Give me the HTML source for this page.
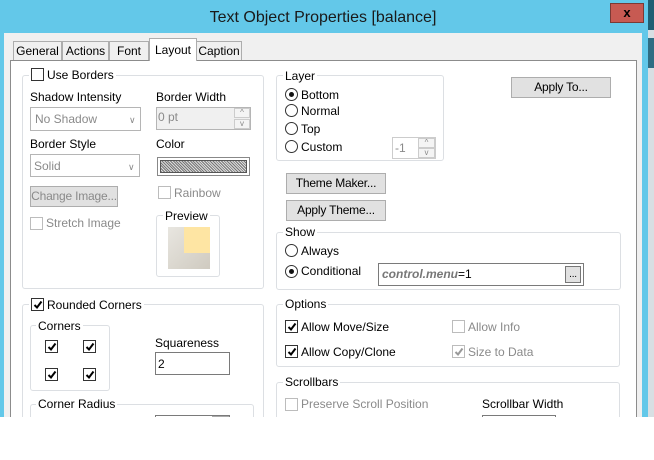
<!DOCTYPE html>
<html><head><style>
*{box-sizing:border-box;margin:0;padding:0}
body{width:654px;height:460px;background:#fff;position:relative;overflow:hidden;font-family:"Liberation Sans",sans-serif;font-size:12px;color:#000}
.a{position:absolute}
.t{position:absolute;white-space:nowrap;line-height:14px}
.g{position:absolute;border:1px solid #dcdfe3;border-radius:3px}
.gl{position:absolute;background:#fff;padding:0 2px;line-height:14px;white-space:nowrap}
.cb{position:absolute;width:13px;height:13px;border:1px solid #333;background:#fff}
.cb.d{border-color:#bcbcbc}
.cb svg{position:absolute;left:1px;top:1px}
.rb{position:absolute;width:13px;height:13px;border:1px solid #333;border-radius:50%;background:#fff}
.rb.on::after{content:"";position:absolute;left:3px;top:3px;width:5px;height:5px;border-radius:50%;background:#111}
.btn{position:absolute;background:#e1e1e1;border:1px solid #adadad;text-align:center;line-height:18px;white-space:nowrap;letter-spacing:-0.2px}
.inp{position:absolute;border:1px solid #7a7a7a;background:#fff}
.tab{position:absolute;top:41px;height:19px;background:#f0f0f0;border:1px solid #adadad;border-bottom:none;text-align:center;line-height:18px}
.dis{color:#8a8a8a}
.sp{position:absolute;border:1px solid #ccc;background:#f4f4f4;font-size:8px;line-height:8px;text-align:center;color:#888}
</style></head><body>
<div class="a" style="left:0;top:0;width:648px;height:417px;background:#63c8e9"></div>
<div class="a" style="left:648px;top:0;width:6px;height:417px;background:#d8dfe3"></div>
<div class="a" style="left:648px;top:0;width:6px;height:30px;background:#1f5f74"></div>
<div class="a" style="left:648px;top:38px;width:6px;height:30px;background:#2f6d83"></div>
<div class="a" style="left:610px;top:3px;width:34px;height:20px;background:#c75a52;border:1px solid #7a3a35;text-align:center;font-weight:bold;font-size:13px;line-height:18px">x</div>
<div class="t" style="left:0;width:646px;text-align:center;top:9px;font-size:16px;line-height:18px;color:#1a1a1a">Text Object Properties [balance]</div>
<div class="a" style="left:4px;top:33px;width:638px;height:384px;background:#f0f0f0"></div>
<div class="a" style="left:10px;top:60px;width:627px;height:360px;background:#fff;border:1px solid #8c8c8c"></div>
<div class="tab" style="left:13px;width:49px">General</div>
<div class="tab" style="left:62px;width:47px">Actions</div>
<div class="tab" style="left:109px;width:40px">Font</div>
<div class="tab" style="left:196px;width:46px">Caption</div>
<div class="tab" style="left:149px;top:38px;height:23px;width:48px;background:#fff;line-height:22px;padding-bottom:4px">Layout</div>

<!-- Use Borders -->
<div class="g" style="left:22px;top:75px;width:242px;height:214px"></div>
<div class="gl" style="left:29px;top:68px;padding-left:18px">Use Borders</div>
<div class="cb" style="left:31px;top:68px"></div>
<div class="t" style="left:30px;top:90px">Shadow Intensity</div>
<div class="inp" style="left:30px;top:107px;width:111px;height:24px;border-color:#b5b5b5"></div>
<div class="t dis" style="left:35px;top:112px">No Shadow</div>
<div class="t dis" style="left:129px;top:113px;font-size:9px">&#8744;</div>
<div class="t" style="left:156px;top:90px">Border Width</div>
<div class="inp" style="left:156px;top:107px;width:95px;height:23px;background:#f0f0f0;border-color:#b5b5b5"></div>
<div class="t dis" style="left:158px;top:110px">0 pt</div>
<div class="sp" style="left:234px;top:108px;width:16px;height:10px">^</div>
<div class="sp" style="left:234px;top:119px;width:16px;height:10px">v</div>
<div class="t" style="left:30px;top:137px">Border Style</div>
<div class="inp" style="left:30px;top:154px;width:110px;height:23px;border-color:#b5b5b5"></div>
<div class="t dis" style="left:34px;top:159px">Solid</div>
<div class="t dis" style="left:128px;top:160px;font-size:9px">&#8744;</div>
<div class="t" style="left:156px;top:137px">Color</div>
<div class="a" style="left:157px;top:157px;width:93px;height:19px;border:1px solid #888;padding:2px;background:#fff"><div style="width:100%;height:100%;border:1px solid #555;background:repeating-linear-gradient(45deg,#777 0 1px,#ddd 1px 2px)"></div></div>
<div class="btn dis" style="left:30px;top:186px;width:88px;height:21px">Change Image...</div>
<div class="cb d" style="left:158px;top:186px"></div>
<div class="t dis" style="left:174px;top:186px">Rainbow</div>
<div class="cb d" style="left:30px;top:217px"></div>
<div class="t dis" style="left:46px;top:216px">Stretch Image</div>
<div class="g" style="left:156px;top:215px;width:64px;height:62px"></div>
<div class="gl" style="left:163px;top:209px">Preview</div>
<div class="a" style="left:168px;top:227px;width:42px;height:42px;background:linear-gradient(135deg,#e8e6e0,#cfcac0)"></div>
<div class="a" style="left:184px;top:227px;width:26px;height:26px;background:#fee5a3"></div>

<!-- Rounded Corners -->
<div class="g" style="left:22px;top:304px;width:242px;height:120px"></div>
<div class="gl" style="left:29px;top:298px;padding-left:18px">Rounded Corners</div>
<div class="cb" style="left:31px;top:298px"><svg width="10" height="10"><path d="M1.5 5 L4 7.5 L8.5 1.5" stroke="#000" stroke-width="2" fill="none"/></svg></div>
<div class="g" style="left:30px;top:325px;width:80px;height:66px"></div>
<div class="gl" style="left:36px;top:319px">Corners</div>
<div class="cb" style="left:45px;top:340px"><svg width="10" height="10"><path d="M1.5 5 L4 7.5 L8.5 1.5" stroke="#000" stroke-width="2" fill="none"/></svg></div>
<div class="cb" style="left:83px;top:340px"><svg width="10" height="10"><path d="M1.5 5 L4 7.5 L8.5 1.5" stroke="#000" stroke-width="2" fill="none"/></svg></div>
<div class="cb" style="left:45px;top:368px"><svg width="10" height="10"><path d="M1.5 5 L4 7.5 L8.5 1.5" stroke="#000" stroke-width="2" fill="none"/></svg></div>
<div class="cb" style="left:83px;top:368px"><svg width="10" height="10"><path d="M1.5 5 L4 7.5 L8.5 1.5" stroke="#000" stroke-width="2" fill="none"/></svg></div>
<div class="t" style="left:155px;top:336px">Squareness</div>
<div class="inp" style="left:155px;top:352px;width:75px;height:23px"></div>
<div class="t" style="left:158px;top:357px">2</div>
<div class="g" style="left:30px;top:404px;width:224px;height:30px"></div>
<div class="gl" style="left:36px;top:397px">Corner Radius</div>
<div class="inp" style="left:155px;top:415px;width:75px;height:10px"></div>
<div class="a" style="left:212px;top:416px;width:17px;height:1px;background:#aaa"></div>

<!-- Layer -->
<div class="g" style="left:276px;top:75px;width:168px;height:86px"></div>
<div class="gl" style="left:283px;top:69px">Layer</div>
<div class="rb on" style="left:285px;top:88px"></div><div class="t" style="left:301px;top:88px">Bottom</div>
<div class="rb" style="left:285px;top:104px"></div><div class="t" style="left:301px;top:104px">Normal</div>
<div class="rb" style="left:285px;top:122px"></div><div class="t" style="left:301px;top:122px">Top</div>
<div class="rb" style="left:285px;top:140px"></div><div class="t" style="left:301px;top:140px">Custom</div>
<div class="inp" style="left:392px;top:137px;width:44px;height:22px;border-color:#ccc"></div>
<div class="t dis" style="left:395px;top:141px">-1</div>
<div class="sp" style="left:418px;top:138px;width:17px;height:10px">^</div>
<div class="sp" style="left:418px;top:148px;width:17px;height:10px">v</div>
<div class="btn" style="left:511px;top:77px;width:100px;height:21px">Apply To...</div>
<div class="btn" style="left:286px;top:173px;width:100px;height:21px">Theme Maker...</div>
<div class="btn" style="left:286px;top:200px;width:100px;height:21px">Apply Theme...</div>

<!-- Show -->
<div class="g" style="left:276px;top:232px;width:345px;height:58px"></div>
<div class="gl" style="left:283px;top:225px">Show</div>
<div class="rb" style="left:285px;top:244px"></div><div class="t" style="left:301px;top:244px">Always</div>
<div class="rb on" style="left:285px;top:265px"></div><div class="t" style="left:301px;top:264px">Conditional</div>
<div class="inp" style="left:378px;top:263px;width:206px;height:23px"></div>
<div class="t" style="left:382px;top:267px"><i style="color:#777;font-weight:bold">control.menu</i>=1</div>
<div class="btn" style="left:565px;top:266px;width:16px;height:17px;border-color:#777;line-height:15px;font-size:10px">...</div>

<!-- Options -->
<div class="g" style="left:276px;top:304px;width:344px;height:63px"></div>
<div class="gl" style="left:283px;top:297px">Options</div>
<div class="cb" style="left:285px;top:320px"><svg width="10" height="10"><path d="M1.5 5 L4 7.5 L8.5 1.5" stroke="#000" stroke-width="2" fill="none"/></svg></div>
<div class="t" style="left:301px;top:320px">Allow Move/Size</div>
<div class="cb" style="left:285px;top:345px"><svg width="10" height="10"><path d="M1.5 5 L4 7.5 L8.5 1.5" stroke="#000" stroke-width="2" fill="none"/></svg></div>
<div class="t" style="left:301px;top:345px">Allow Copy/Clone</div>
<div class="cb d" style="left:452px;top:320px"></div>
<div class="t dis" style="left:468px;top:320px">Allow Info</div>
<div class="cb d" style="left:452px;top:345px"><svg width="10" height="10"><path d="M1.5 5 L4 7.5 L8.5 1.5" stroke="#999" stroke-width="2" fill="none"/></svg></div>
<div class="t dis" style="left:468px;top:345px">Size to Data</div>

<!-- Scrollbars -->
<div class="g" style="left:276px;top:382px;width:344px;height:50px"></div>
<div class="gl" style="left:283px;top:375px">Scrollbars</div>
<div class="cb d" style="left:285px;top:398px"></div>
<div class="t dis" style="left:301px;top:397px">Preserve Scroll Position</div>
<div class="t" style="left:482px;top:397px">Scrollbar Width</div>
<div class="inp" style="left:482px;top:415px;width:74px;height:10px"></div>

<div class="a" style="left:0;top:417px;width:654px;height:43px;background:#fff"></div>
</body></html>
